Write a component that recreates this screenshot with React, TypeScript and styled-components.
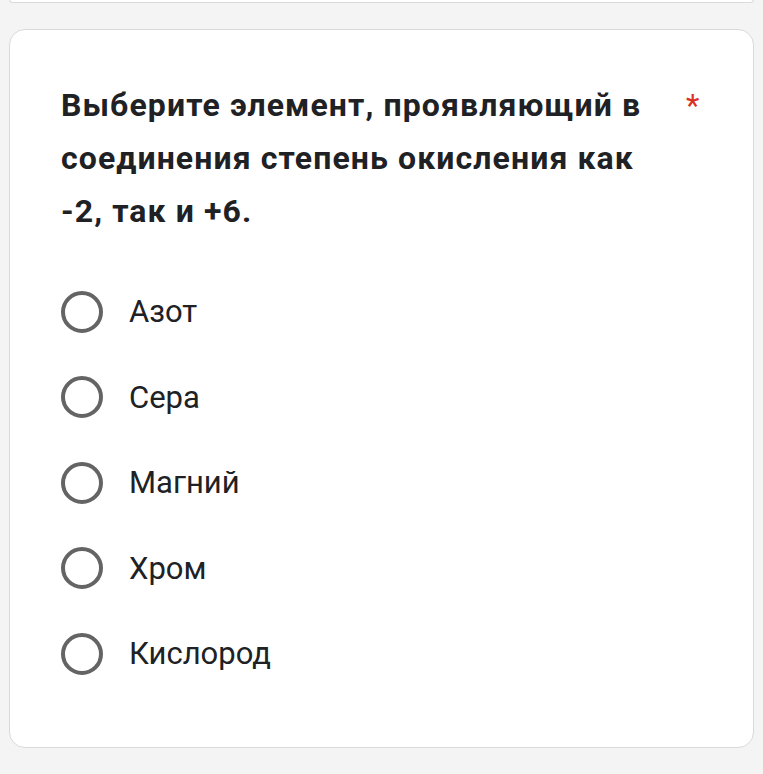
import React from "react";
import styled, { createGlobalStyle } from "styled-components";

const Global = createGlobalStyle`
  html, body { margin: 0; padding: 0; background: #f4f4f4; }
  body { font-family: Roboto, "Noto Sans", Arial, sans-serif; }
`;

const Page = styled.div`
  width: 763px;
  height: 774px;
  overflow: hidden;
  background: #f4f4f4;
  display: flex;
  flex-direction: column;
  gap: 26px;
  padding: 0 9px;
  box-sizing: border-box;
`;

const PrevCard = styled.div`
  height: 3px;
  margin-top: -1px;
  background: #fff;
  border: 1.5px solid #dadada;
  border-top: none;
  border-radius: 0 0 14px 14px;
`;

const Card = styled.section`
  background: #fff;
  border: 1.5px solid #dadada;
  border-radius: 16px;
  padding: 49px 51px 50px 51px;
  box-sizing: border-box;
  height: 719px;
  display: flex;
  flex-direction: column;
`;

const Header = styled.div`
  display: flex;
  align-items: flex-start;
`;

const Title = styled.h2`
  margin: 0;
  width: 605px;
  font-family: Roboto, "Noto Sans", sans-serif;
  font-weight: 700;
  font-size: 32px;
  letter-spacing: 1.1px;
  line-height: 53px;
  color: #202124;
`;

const Required = styled.span`
  color: #d93025;
  font-family: Roboto, sans-serif;
  font-size: 31px;
  line-height: 53px;
  margin-left: 20px;
  margin-top: 0px;
`;

const Options = styled.div`
  display: flex;
  flex-direction: column;
  margin-top: 31px;
`;

const Option = styled.label`
  display: flex;
  align-items: center;
  height: 85.5px;
  gap: 26px;
  cursor: pointer;
`;

const Radio = styled.span`
  width: 42px;
  height: 42px;
  box-sizing: border-box;
  border-radius: 50%;
  border: 4px solid #646464;
  flex-shrink: 0;
`;

const OptionText = styled.span`
  font-family: Roboto, "Noto Sans", sans-serif;
  font-size: 31px;
  color: #202124;
`;

const options = ["Азот", "Сера", "Магний", "Хром", "Кислород"];

export default function App() {
  return (
    <>
      <Global />
      <Page>
        <PrevCard />
        <Card>
          <Header>
            <Title>
              Выберите элемент, проявляющий в соединения степень окисления как
              -2, так и +6.
            </Title>
            <Required>*</Required>
          </Header>
          <Options>
            {options.map((o) => (
              <Option key={o}>
                <Radio />
                <OptionText>{o}</OptionText>
              </Option>
            ))}
          </Options>
        </Card>
      </Page>
    </>
  );
}
